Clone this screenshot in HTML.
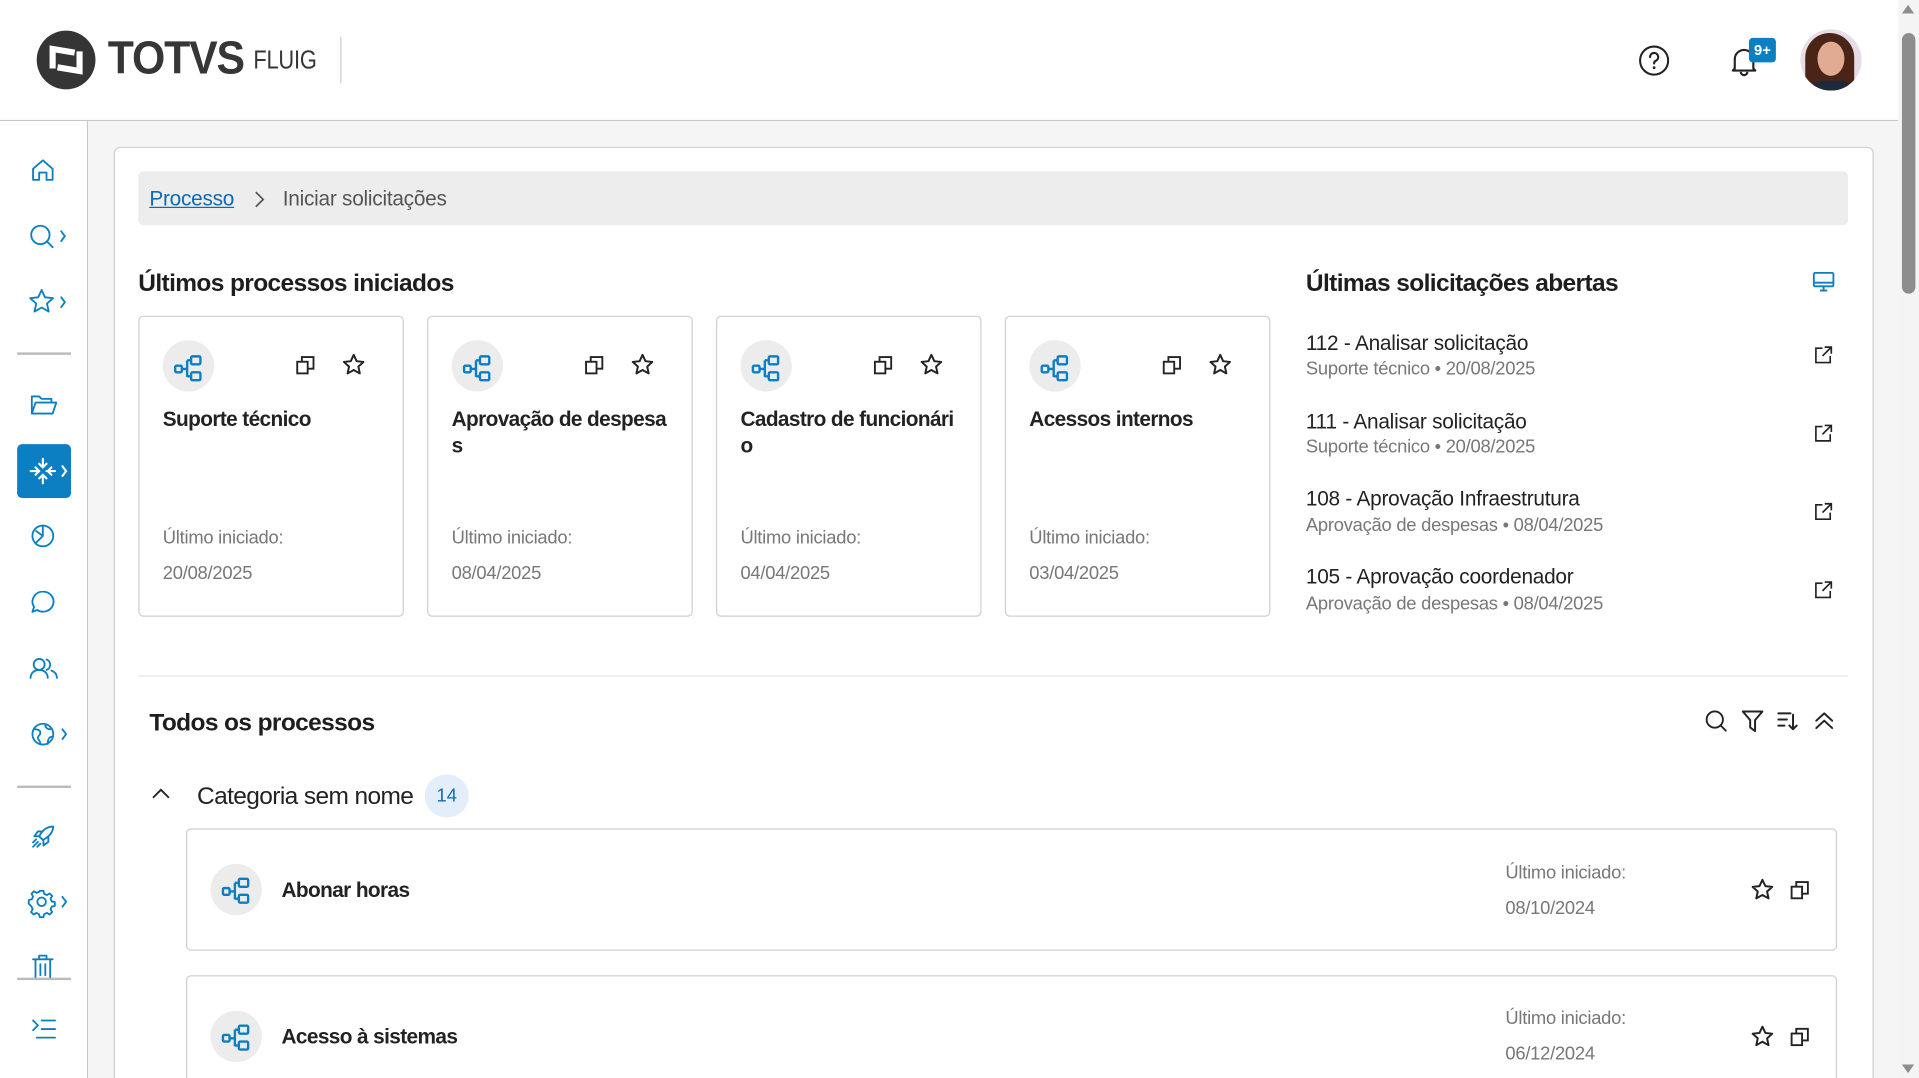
<!DOCTYPE html>
<html><head><meta charset="utf-8">
<style>
html,body{margin:0;padding:0;width:1919px;height:1078px;overflow:hidden;background:#fff}
#c{position:absolute;left:0;top:0;width:1568px;height:881px;overflow:hidden;transform:scale(1.2239,1.2236);transform-origin:0 0;font-family:"Liberation Sans",sans-serif;color:#222}
.a{position:absolute}
.t{position:absolute;white-space:nowrap;letter-spacing:-0.2px}
svg{position:absolute;overflow:visible}
.ic{fill:none;stroke:#0b7fc1;stroke-width:1.5;stroke-linecap:round;stroke-linejoin:round}
.ik{fill:none;stroke:#222;stroke-width:1.6;stroke-linecap:round;stroke-linejoin:round}
.card{position:absolute;background:#fff;border:1px solid #cfcfcf;border-radius:4px;box-sizing:border-box}
.circ{position:absolute;width:42px;height:42px;border-radius:50%;background:#ececec}
.gray{color:#777}
.b{font-weight:bold;letter-spacing:-0.5px}
</style></head><body><div id="c">
<svg width="0" height="0" style="position:absolute">
<defs>
<symbol id="flow" viewBox="0 0 24 24"><g fill="none" stroke="#0b7fc1" stroke-width="1.8" stroke-linejoin="round"><rect x="2" y="10" width="5" height="5" rx="1"/><rect x="14" y="3" width="7" height="6" rx="1"/><rect x="14" y="15" width="7" height="6" rx="1"/><path d="M7 12.5h4M11 6v12.5M11 6h3M11 18h3"/></g></symbol>
<symbol id="copy" viewBox="0 0 20 20"><g fill="none" stroke="#222" stroke-width="1.6"><rect x="3" y="7" width="9" height="10"/><path d="M7 7V3h10v10h-5"/></g></symbol>
<symbol id="star" viewBox="0 0 20 20"><path d="M10 2l2.4 5.2 5.6.6-4.2 3.8 1.2 5.6L10 14.4 5 17.2l1.2-5.6L2 7.8l5.6-.6z" fill="none" stroke="#222" stroke-width="1.6" stroke-linejoin="round"/></symbol>
<symbol id="ext" viewBox="0 0 20 20"><g fill="none" stroke="#222" stroke-width="1.5"><path d="M9 4H3v13h13v-6"/><path d="M11 3h6v6M17 3l-8 8"/></g></symbol>
</defs></svg>

<!-- header -->
<div class="a" style="left:0;top:0;width:1551px;height:98px;background:#fff;border-bottom:1px solid #c8c8c8"></div>
<svg style="left:30px;top:25px" width="48" height="48" viewBox="0 0 48 48"><circle cx="24" cy="24" r="24" fill="#353535"/><path d="M13 31V15l18 3" fill="none" stroke="#fff" stroke-width="5"/><path d="M35 17v16l-18-3" fill="none" stroke="#fff" stroke-width="5"/></svg>
<div class="t" style="left:88px;top:26px;font-size:38px;font-weight:bold;color:#363636;letter-spacing:-1px;line-height:44px;transform:scaleX(.92);transform-origin:0 0">TOTVS</div>
<div class="t" style="left:207px;top:37px;font-size:21px;color:#363636;line-height:26px;transform:scaleX(.85);transform-origin:0 0">FLUIG</div>
<div class="a" style="left:278px;top:30px;width:1px;height:38px;background:#ccc"></div>
<svg style="left:1339px;top:37px" width="25" height="25" viewBox="0 0 24 24"><circle cx="12" cy="12" r="11" fill="none" stroke="#222" stroke-width="1.6"/><path d="M8.8 9.2a3.2 3.2 0 1 1 4.4 3c-.9.4-1.2 1-1.2 2" fill="none" stroke="#222" stroke-width="1.7" stroke-linecap="round"/><circle cx="12" cy="17.6" r="1.1" fill="#222"/></svg>
<svg style="left:1412px;top:36px" width="26" height="27" viewBox="0 0 24 24"><path d="M5 18V11a7 7 0 0 1 14 0v7l1.5 1.5h-17z" fill="none" stroke="#222" stroke-width="1.6" stroke-linejoin="round"/><path d="M9.5 20.5a2.5 2.5 0 0 0 5 0" fill="none" stroke="#222" stroke-width="1.6"/></svg>
<div class="a" style="left:1429px;top:31px;width:22px;height:20px;border-radius:3px;background:#0b7fc1;color:#fff;font-size:12px;font-weight:bold;text-align:center;line-height:20px">9+</div>
<div class="a" style="left:1471px;top:24px;width:50px;height:50px;border-radius:50%;overflow:hidden;background:#e6dde6">
<div class="a" style="left:4px;top:3px;width:40px;height:52px;border-radius:20px 20px 8px 8px;background:#4a2417"></div>
<div class="a" style="left:14px;top:10px;width:22px;height:28px;border-radius:50%;background:#e0ab92"></div>
<div class="a" style="left:10px;top:42px;width:30px;height:12px;border-radius:6px;background:#1e2a3a"></div>
</div>

<!-- scrollbar -->
<div class="a" style="left:1551px;top:0;width:17px;height:881px;background:#f4f4f4"></div>
<div class="a" style="left:1554px;top:27px;width:11px;height:213px;border-radius:6px;background:#8d8d8d"></div>
<div class="a" style="left:1554px;top:4px;width:0;height:0;border-left:5px solid transparent;border-right:5px solid transparent;border-bottom:7px solid #8d8d8d"></div>
<div class="a" style="left:1554px;top:870px;width:0;height:0;border-left:5px solid transparent;border-right:5px solid transparent;border-top:7px solid #8d8d8d"></div>

<!-- sidebar -->
<div class="a" style="left:0;top:99px;width:71px;height:782px;background:#fff;border-right:1px solid #c8c8c8"></div>
<div class="a" style="left:72px;top:99px;width:1479px;height:782px;background:#f5f5f5"></div>
<svg style="left:25px;top:129px" width="20" height="20" viewBox="0 0 20 20" class="ic"><path d="M2 9L10 2l8 7v9h-5v-6H7v6H2z"/></svg>
<svg style="left:24px;top:183px" width="32" height="22" viewBox="0 0 32 22" class="ic"><circle cx="9" cy="9" r="7.5"/><path d="M14.5 14.5L19 19M26 6l3 4-3 4"/></svg>
<svg style="left:24px;top:236px" width="32" height="22" viewBox="0 0 32 22" class="ic"><path d="M10 1l2.8 6 6.5.7-4.9 4.4 1.4 6.5L10 15.3l-5.8 3.3 1.4-6.5L.7 7.7l6.5-.7z"/><path d="M26 7l3 4-3 4"/></svg>
<div class="a" style="left:14px;top:288px;width:44px;height:1.5px;background:#bbb"></div>
<svg style="left:25px;top:322px" width="22" height="18" viewBox="0 0 22 18" class="ic"><path d="M1 16V2h6l2 2h8v3M1 16l3-9h17l-3 9z"/></svg>
<div class="a" style="left:14px;top:363px;width:44px;height:44px;border-radius:4px;background:#0b7fc1"></div>
<svg style="left:24px;top:373px" width="34" height="24" viewBox="0 0 34 24" fill="none" stroke="#fff" stroke-width="1.7" stroke-linecap="round"><path d="M11 2v7M8 6l3 3 3-3M11 22v-7M8 18l3-3 3 3M1 12h7M5 9l3 3-3 3M21 12h-7M18 9l-3 3 3 3M27 8l3 4-3 4"/></svg>
<svg style="left:25px;top:428px" width="20" height="20" viewBox="0 0 20 20" class="ic"><circle cx="10" cy="10" r="8.5"/><path d="M10 1.5V10l-6 6M10 10l-5.5-4"/></svg>
<svg style="left:25px;top:482px" width="20" height="20" viewBox="0 0 20 20" class="ic"><path d="M10 1.5a8.5 8.2 0 1 1-4.5 15L1.5 18l1.3-4A8.5 8.2 0 0 1 10 1.5z"/></svg>
<svg style="left:24px;top:537px" width="24" height="18" viewBox="0 0 24 18" class="ic"><circle cx="8" cy="6" r="4.5"/><path d="M1 17c0-4 3-6.5 7-6.5s7 2.5 7 6.5M14 2a4.5 4.5 0 0 1 0 8.5M18 11c2.5 1 4.5 3 4.5 6"/></svg>
<svg style="left:25px;top:590px" width="32" height="22" viewBox="0 0 32 22" class="ic"><circle cx="10" cy="10" r="8.5"/><path d="M3 6c3 0 5 1 5 3s-2 2-2 4 2 2 2 5M12 2c0 3 2 4 4 4M18 12c-3 0-4 2-4 6"/><path d="M26 6l3 4-3 4"/></svg>
<div class="a" style="left:14px;top:642px;width:44px;height:1.5px;background:#bbb"></div>
<svg style="left:25px;top:674px" width="20" height="20" viewBox="0 0 20 20" class="ic"><path d="M18.5 1.5c-5 0-9 3-11.5 8l3 3c5-2.5 8.5-6.5 8.5-11zM7 9.5H3l3-4h4M10.5 13v4l4-3v-4M6 14l-4 4M4.5 12L2 14.5M8 15.5L5.5 18"/></svg>
<svg style="left:24px;top:727px" width="32" height="22" viewBox="0 0 32 22" class="ic"><circle cx="10" cy="10" r="3.5"/><path d="M8.5 1h3l.6 2.5 2.2 1 2.3-1.3 2 2-1.3 2.3 1 2.2 2.5.6v3l-2.5.6-1 2.2 1.3 2.3-2 2-2.3-1.3-2.2 1-.6 2.5h-3l-.6-2.5-2.2-1-2.3 1.3-2-2 1.3-2.3-1-2.2L-.5 11.5v-3l2.5-.6 1-2.2L1.7 3.4l2-2L6 2.7l2.2-1z"/><path d="M27 6l3 4-3 4"/></svg>
<svg style="left:26px;top:780px" width="18" height="20" viewBox="0 0 18 20" class="ic"><path d="M1 4h16M6 4V1h6v3M3 4v16M15 4v16M7 8v9M11 8v9"/></svg>
<div class="a" style="left:14px;top:799px;width:44px;height:1.5px;background:#bbb"></div>
<svg style="left:26px;top:832px" width="20" height="18" viewBox="0 0 20 18" class="ic"><path d="M1 2l4 4-4 4M8 2h11M8 9h11M4 16h15"/></svg>

<!-- main card -->
<div class="card" style="left:93px;top:120px;width:1438px;height:780px;border-radius:5px"></div>
<div class="a" style="left:113px;top:140px;width:1397px;height:44px;background:#ededed;border-radius:4px"></div>
<div class="t" style="left:122px;top:152px;font-size:17px;line-height:22px;color:#0b6cb3;text-decoration:underline">Processo</div>
<svg style="left:207px;top:156px" width="10" height="14" viewBox="0 0 10 14"><path d="M2 1l6 6-6 6" fill="none" stroke="#555" stroke-width="1.4"/></svg>
<div class="t" style="left:231px;top:152px;font-size:17px;line-height:22px;color:#555">Iniciar solicitações</div>

<div class="t b" style="left:113px;top:220px;font-size:20px;line-height:24px;color:#1e1e1e">Últimos processos iniciados</div>

<!-- process cards -->
<div class="card" style="left:113px;top:258px;width:217px;height:246px"></div>
<div class="card" style="left:349px;top:258px;width:217px;height:246px"></div>
<div class="card" style="left:585px;top:258px;width:217px;height:246px"></div>
<div class="card" style="left:821px;top:258px;width:217px;height:246px"></div>

<div class="circ" style="left:133px;top:278px"></div><svg style="left:141px;top:288px" width="26" height="26"><use href="#flow"/></svg>
<svg style="left:240px;top:289px" width="19" height="19"><use href="#copy"/></svg><svg style="left:279px;top:288px" width="20" height="20"><use href="#star"/></svg>
<div class="t b" style="left:133px;top:332px;font-size:17px;line-height:22px">Suporte técnico</div>
<div class="t gray" style="left:133px;top:430px;font-size:15px;line-height:20px">Último iniciado:</div>
<div class="t gray" style="left:133px;top:459px;font-size:15px;line-height:20px">20/08/2025</div>

<div class="circ" style="left:369px;top:278px"></div><svg style="left:377px;top:288px" width="26" height="26"><use href="#flow"/></svg>
<svg style="left:476px;top:289px" width="19" height="19"><use href="#copy"/></svg><svg style="left:515px;top:288px" width="20" height="20"><use href="#star"/></svg>
<div class="t b" style="left:369px;top:332px;font-size:17px;line-height:22px">Aprovação de despesa<br>s</div>
<div class="t gray" style="left:369px;top:430px;font-size:15px;line-height:20px">Último iniciado:</div>
<div class="t gray" style="left:369px;top:459px;font-size:15px;line-height:20px">08/04/2025</div>

<div class="circ" style="left:605px;top:278px"></div><svg style="left:613px;top:288px" width="26" height="26"><use href="#flow"/></svg>
<svg style="left:712px;top:289px" width="19" height="19"><use href="#copy"/></svg><svg style="left:751px;top:288px" width="20" height="20"><use href="#star"/></svg>
<div class="t b" style="left:605px;top:332px;font-size:17px;line-height:22px">Cadastro de funcionári<br>o</div>
<div class="t gray" style="left:605px;top:430px;font-size:15px;line-height:20px">Último iniciado:</div>
<div class="t gray" style="left:605px;top:459px;font-size:15px;line-height:20px">04/04/2025</div>

<div class="circ" style="left:841px;top:278px"></div><svg style="left:849px;top:288px" width="26" height="26"><use href="#flow"/></svg>
<svg style="left:948px;top:289px" width="19" height="19"><use href="#copy"/></svg><svg style="left:987px;top:288px" width="20" height="20"><use href="#star"/></svg>
<div class="t b" style="left:841px;top:332px;font-size:17px;line-height:22px">Acessos internos</div>
<div class="t gray" style="left:841px;top:430px;font-size:15px;line-height:20px">Último iniciado:</div>
<div class="t gray" style="left:841px;top:459px;font-size:15px;line-height:20px">03/04/2025</div>

<!-- right list -->
<div class="t b" style="left:1067px;top:220px;font-size:20px;line-height:24px;color:#1e1e1e">Últimas solicitações abertas</div>
<svg style="left:1481px;top:222px" width="18" height="17" viewBox="0 0 18 17"><rect x="1" y="1" width="16" height="11" rx="1" fill="none" stroke="#0b7fc1" stroke-width="1.5"/><path d="M1 9h16M9 12v3M6 15.5h6" stroke="#0b7fc1" stroke-width="1.5"/></svg>

<div class="t" style="left:1067px;top:270px;font-size:17px;line-height:22px">112 - Analisar solicitação</div>
<div class="t gray" style="left:1067px;top:292px;font-size:15px;line-height:19px">Suporte técnico • 20/08/2025</div>
<svg style="left:1481px;top:281px" width="18" height="18"><use href="#ext"/></svg>
<div class="t" style="left:1067px;top:334px;font-size:17px;line-height:22px">111 - Analisar solicitação</div>
<div class="t gray" style="left:1067px;top:356px;font-size:15px;line-height:19px">Suporte técnico • 20/08/2025</div>
<svg style="left:1481px;top:345px" width="18" height="18"><use href="#ext"/></svg>
<div class="t" style="left:1067px;top:397px;font-size:17px;line-height:22px">108 - Aprovação Infraestrutura</div>
<div class="t gray" style="left:1067px;top:420px;font-size:15px;line-height:19px">Aprovação de despesas • 08/04/2025</div>
<svg style="left:1481px;top:409px" width="18" height="18"><use href="#ext"/></svg>
<div class="t" style="left:1067px;top:461px;font-size:17px;line-height:22px">105 - Aprovação coordenador</div>
<div class="t gray" style="left:1067px;top:484px;font-size:15px;line-height:19px">Aprovação de despesas • 08/04/2025</div>
<svg style="left:1481px;top:473px" width="18" height="18"><use href="#ext"/></svg>

<div class="a" style="left:113px;top:552px;width:1397px;height:1px;background:#e6e6e6"></div>

<div class="t b" style="left:122px;top:579px;font-size:20px;line-height:24px;color:#1e1e1e">Todos os processos</div>
<svg style="left:1393px;top:580px" width="19" height="19" viewBox="0 0 20 20" class="ik"><circle cx="8.5" cy="8.5" r="7"/><path d="M13.5 13.5L18 18"/></svg>
<svg style="left:1423px;top:580px" width="18" height="19" viewBox="0 0 18 19" class="ik"><path d="M1 1.5h16l-6 7v9l-4-3v-6z"/></svg>
<svg style="left:1452px;top:581px" width="18" height="17" viewBox="0 0 18 17" class="ik" style="stroke-width:1.3"><path d="M1 2h10M1 7h7M1 12h5M13 3v12M10 12l3 3 3-3"/></svg>
<svg style="left:1482px;top:580px" width="17" height="17" viewBox="0 0 17 17" class="ik"><path d="M2 9l6.5-6 6.5 6M2 15l6.5-6 6.5 6"/></svg>

<svg style="left:124px;top:644px" width="15" height="10" viewBox="0 0 15 10"><path d="M1 8l6.5-6.5L14 8" fill="none" stroke="#222" stroke-width="1.5"/></svg>
<div class="t" style="left:161px;top:638px;font-size:20px;line-height:26px;color:#222;letter-spacing:-0.5px">Categoria sem nome</div>
<div class="a" style="left:347px;top:633px;width:36px;height:35px;border-radius:18px;background:#e3eefa;color:#0b6cb3;font-size:15px;text-align:center;line-height:35px">14</div>

<div class="card" style="left:152px;top:677px;width:1349px;height:100px"></div>
<div class="circ" style="left:172px;top:706px"></div><svg style="left:180px;top:715px" width="26" height="26"><use href="#flow"/></svg>
<div class="t b" style="left:230px;top:717px;font-size:17px;line-height:22px">Abonar horas</div>
<div class="t gray" style="left:1230px;top:704px;font-size:15px;line-height:20px">Último iniciado:</div>
<div class="t gray" style="left:1230px;top:733px;font-size:15px;line-height:20px">08/10/2024</div>
<svg style="left:1430px;top:717px" width="20" height="20"><use href="#star"/></svg><svg style="left:1461px;top:718px" width="19" height="19"><use href="#copy"/></svg>

<div class="card" style="left:152px;top:797px;width:1349px;height:110px"></div>
<div class="circ" style="left:172px;top:826px"></div><svg style="left:180px;top:835px" width="26" height="26"><use href="#flow"/></svg>
<div class="t b" style="left:230px;top:837px;font-size:17px;line-height:22px">Acesso à sistemas</div>
<div class="t gray" style="left:1230px;top:823px;font-size:15px;line-height:20px">Último iniciado:</div>
<div class="t gray" style="left:1230px;top:852px;font-size:15px;line-height:20px">06/12/2024</div>
<svg style="left:1430px;top:837px" width="20" height="20"><use href="#star"/></svg><svg style="left:1461px;top:838px" width="19" height="19"><use href="#copy"/></svg>
</div></body></html>
